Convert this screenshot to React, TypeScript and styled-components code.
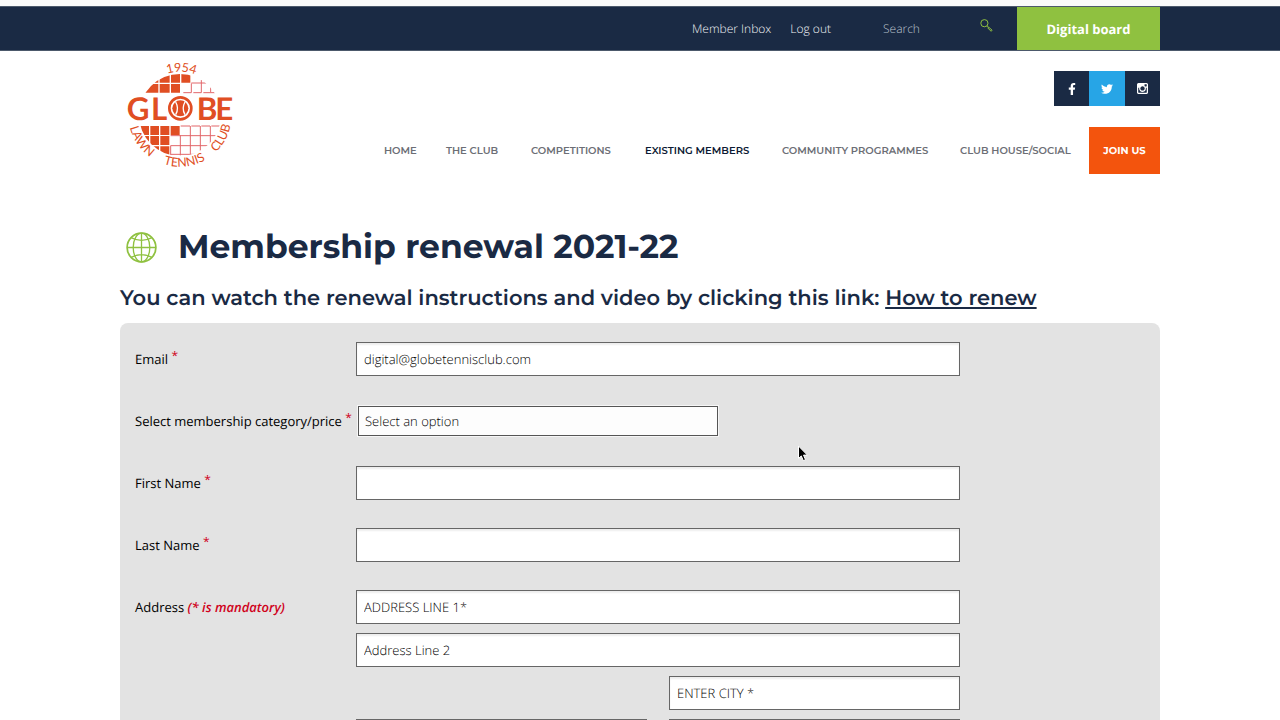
import React from "react";
import styled, { createGlobalStyle } from "styled-components";
import { FaFacebookF, FaTwitter } from "react-icons/fa";

const navy = "#1a2a44";
const green = "#8fc140";
const orange = "#f3540d";
const logoOrange = "#e04e23";
const bodyFont = `"Open Sans", "Noto Sans", sans-serif`;
const headingFont = `Montserrat, Inter, sans-serif`;

const GlobalStyle = createGlobalStyle`
  *, *::before, *::after { box-sizing: border-box; }
  html { scrollbar-width: none; }
  body {
    margin: 0;
    background: #fff;
    color: #000;
    font-family: ${bodyFont};
    font-size: 13px;
    line-height: 18px;
    text-rendering: geometricPrecision;
  }
  input, select, button { text-rendering: inherit; }
  a { color: inherit; text-decoration: none; }
`;

const Page = styled.div`
  position: relative;
  border-top: 6px solid #fafafa;
`;

const Container = styled.div`
  max-width: 1040px;
  margin: 0 auto;
`;

const TopBar = styled.div`
  background: ${navy};
  border-top: 1px solid #4c596b;
  border-bottom: 1px solid #4c596b;
`;

const TopBarInner = styled(Container)`
  display: flex;
  align-items: stretch;
  justify-content: flex-end;
  height: 43px;
`;

const TopLinks = styled.nav`
  display: flex;
  align-items: center;
  gap: 19px;
  color: #f0f2f5;
  font-size: 12px;
  font-weight: 300;
`;

const SearchForm = styled.form`
  display: flex;
  align-items: center;
  width: 110px;
  margin: 0 24px 0 52px;
`;

const SearchInput = styled.input`
  flex: 1;
  min-width: 0;
  padding: 0;
  border: 0;
  background: transparent;
  color: #fff;
  font: 300 12px/18px ${bodyFont};
  &::placeholder { color: #bcc3cd; opacity: 1; }
`;

const SearchButton = styled.button`
  display: flex;
  padding: 0 0 6px;
  border: 0;
  background: none;
`;

const BoardLink = styled.a`
  display: flex;
  align-items: center;
  justify-content: center;
  width: 143px;
  background: ${green};
  color: #fff;
  font-size: 13px;
  font-weight: 700;
`;

const Header = styled.header`
  padding-top: 10px;
`;

const HeaderInner = styled(Container)`
  display: flex;
  justify-content: space-between;
  align-items: flex-start;
`;

const LogoLink = styled.a`
  display: block;
  padding-left: 6px;
  svg { display: block; overflow: visible; }
`;

const HeaderRight = styled.div`
  display: flex;
  flex-direction: column;
  align-items: flex-end;
  gap: 21px;
  padding-top: 10px;
`;

const SocialLinks = styled.div`
  display: flex;
`;

const SocialLink = styled.a<{ $bg: string; $width: number }>`
  display: flex;
  align-items: center;
  justify-content: center;
  width: ${(p) => p.$width}px;
  height: 35px;
  background: ${(p) => p.$bg};
  color: #fff;
`;

const MainNav = styled.nav`
  display: flex;
  align-items: stretch;
  height: 47px;
  font-family: ${headingFont};
  font-size: 10px;
  font-weight: 600;
`;

const NavLink = styled.a<{ $width: number; $active?: boolean }>`
  display: flex;
  align-items: center;
  width: ${(p) => p.$width}px;
  white-space: nowrap;
  color: ${(p) => (p.$active ? "#0c1a33" : "#6c6e75")};
`;

const JoinLink = styled.a`
  display: flex;
  align-items: center;
  justify-content: center;
  width: 71px;
  background: ${orange};
  color: #fff;
  font-weight: 700;
`;

const Main = styled(Container).attrs({ as: "main" })`
  padding-top: 49px;
`;

const TitleRow = styled.div`
  display: flex;
  align-items: center;
  gap: 21px;
  height: 48px;
  padding-left: 6px;
  svg { flex: none; }
`;

const Title = styled.h1`
  margin: 0;
  color: ${navy};
  font: 700 33px/48px ${headingFont};
`;

const Intro = styled.h2`
  margin: 14px 0 10px;
  color: ${navy};
  font: 600 21px/28px ${headingFont};
  white-space: nowrap;
  a { text-decoration: underline; text-decoration-thickness: 2px; text-underline-offset: 2px; }
`;

const FormPanel = styled.form`
  display: flex;
  flex-direction: column;
  gap: 28px;
  padding: 19px 15px 28px;
  border-radius: 8px;
  background: #e3e3e3;
`;

const Row = styled.div`
  display: grid;
  grid-template-columns: 221px minmax(0, 604px);
  align-items: start;
`;

const Label = styled.label`
  line-height: 34px;
  font-weight: 500;
  white-space: nowrap;
`;

const Star = styled.span`
  color: #d0021b;
  font-size: 12px;
  line-height: 12px;
  position: relative;
  top: -4px;
`;

const Mandatory = styled.em`
  color: #d0021b;
  font-weight: 600;
`;

const TextInput = styled.input`
  width: 100%;
  height: 34px;
  padding: 0 7px;
  border: 1px solid #666;
  border-radius: 0;
  background: #fff;
  box-shadow: inset 0 2px 2px #eee;
  color: #000;
  font: 300 13px/18px ${bodyFont};
  &::placeholder { color: #000; opacity: 1; }
`;

const SelectInput = styled.select`
  width: 360px;
  height: 30px;
  margin: 2px;
  padding: 0 6px;
  appearance: none;
  border: 1px solid #555;
  border-radius: 0;
  outline: 1px solid #f6f6f6;
  background: #fdfdfd;
  color: #000;
  font: 300 13px/18px ${bodyFont};
`;

const AddressFields = styled.div`
  display: grid;
  grid-template-columns: 1fr 1fr;
  gap: 9px 22px;
`;

const WideInput = styled(TextInput)`
  grid-column: 1 / -1;
`;

const RightInput = styled(TextInput)`
  grid-column: 2;
`;

const Pointer = styled.svg`
  position: absolute;
  left: 797px;
  top: 439px;
  pointer-events: none;
`;

function ClubLogo() {
  return (
    <svg width="107" height="107" viewBox="48 33 321 321" role="img" aria-label="Globe Lawn Tennis Club 1954">
      <defs>
        <clipPath id="globe"><circle cx="210" cy="195" r="123" /></clipPath>
        <path id="arcTop" d="M80 195 A130 130 0 0 1 340 195" />
        <path id="arcBottom" d="M55 195 A155 155 0 0 0 365 195" />
      </defs>
      <g clipPath="url(#globe)">
        <path
          fill={logoOrange}
          d="M80 70h65v28h-65zM149 70h30v28h-30zM183 70h27v28h-27zM214 70h27v28h-27z
             M80 102h65v26h-65zM149 102h30v26h-30zM183 102h27v26h-27z
             M80 228h37v27h-37zM121 228h26v27h-26zM151 228h27v27h-27zM182 228h27v27h-27z
             M80 258h37v27h-37zM121 258h26v27h-26zM151 258h27v27h-27z
             M80 289h67v30h-67zM151 289h27v30h-27z"
        />
        <path
          fill="none"
          stroke="#e2676a"
          strokeWidth="3"
          d="M244 99h45M220 128h24v-28M250 128h24v-38M280 128h22v-26M302 128h16
             M212 228h28M244 228h26M274 228h26M304 228h30M182 257h148M182 287h138M182 313h74
             M211 256v60M241 228v86M271 228v86M301 228v66M182 287v30"
        />
      </g>
      <g fill={logoOrange} fontFamily="Lato, sans-serif">
        <g fontSize="94" fontWeight="700">
          <text x="50" y="210">G</text>
          <text x="123" y="210">L</text>
          <text x="260" y="210">B</text>
          <text x="316" y="210">E</text>
        </g>
        <g fontSize="37" fontWeight="400">
          <text textAnchor="middle"><textPath href="#arcTop" startOffset="51%">1954</textPath></text>
          <text textAnchor="middle"><textPath href="#arcBottom" startOffset="19%">LAWN</textPath></text>
          <text textAnchor="middle"><textPath href="#arcBottom" startOffset="53%">TENNIS</textPath></text>
          <text textAnchor="middle"><textPath href="#arcBottom" startOffset="84%">CLUB</textPath></text>
        </g>
      </g>
      <circle cx="211" cy="175" r="33" fill="#fff" stroke={logoOrange} strokeWidth="8" />
      <circle cx="211" cy="175" r="24" fill={logoOrange} />
      <path d="M197 156Q208 175 197 194M225 156Q214 175 225 194" fill="none" stroke="#fff" strokeWidth="4" />
    </svg>
  );
}

function SearchIcon() {
  return (
    <svg width="13" height="13" viewBox="0 0 13 13" fill="none" stroke={green} aria-hidden="true">
      <circle cx="4.4" cy="4.2" r="3.6" />
      <path d="M7 6.8l1.6 1.5" />
      <path d="M8.6 8.1l3.5 3.1-1 1.1-3.3-3.3z" strokeLinejoin="round" />
    </svg>
  );
}

function GlobeIcon() {
  return (
    <svg width="31" height="31" viewBox="0 0 31 31" fill="none" stroke={green} strokeWidth="1.3" aria-hidden="true">
      <circle cx="15.5" cy="15.5" r="14.4" strokeWidth="1.7" />
      <ellipse cx="15.5" cy="15.5" rx="8.3" ry="14.4" />
      <path d="M15.5 1v29M1 15.5h29M5 5.6Q15.5 11 26 5.6M5 25.4Q15.5 20 26 25.4" />
    </svg>
  );
}

function InstagramIcon() {
  return (
    <svg width="11" height="11" viewBox="0 128 1536 1536" fill="currentColor" aria-hidden="true">
      <path d="M1362 1426v-648h-135q20 63 20 131 0 126-64 232.5t-174 168.5-240 62q-197 0-337-135.5t-140-327.5q0-68 20-131h-141v648q0 26 17.5 43.5t43.5 17.5h1069q25 0 43-17.5t18-43.5zm-284-533q0-124-90.5-211.5t-218.5-87.5q-127 0-217.5 87.5t-90.5 211.5 90.5 211.5 217.5 87.5q128 0 218.5-87.5t90.5-211.5zm284-360v-165q0-28-20-48.5t-49-20.5h-174q-29 0-49 20.5t-20 48.5v165q0 29 20 49t49 20h174q29 0 49-20t20-49zm174-208v1142q0 81-58 139t-139 58h-1142q-81 0-139-58t-58-139v-1142q0-81 58-139t139-58h1142q81 0 139 58t58 139z" />
    </svg>
  );
}

const navItems = [
  { text: "HOME", width: 62 },
  { text: "THE CLUB", width: 85 },
  { text: "COMPETITIONS", width: 114 },
  { text: "EXISTING MEMBERS", width: 137, active: true },
  { text: "COMMUNITY PROGRAMMES", width: 178 },
  { text: "CLUB HOUSE/SOCIAL", width: 129 },
];

export default function App() {
  return (
    <>
      <GlobalStyle />
      <Page>
        <TopBar>
          <TopBarInner>
            <TopLinks aria-label="Account">
              <a href="#inbox">Member Inbox</a>
              <a href="#logout">Log out</a>
            </TopLinks>
            <SearchForm role="search">
              <SearchInput type="text" placeholder="Search" aria-label="Search" />
              <SearchButton type="button" aria-label="Go"><SearchIcon /></SearchButton>
            </SearchForm>
            <BoardLink href="#board">Digital board</BoardLink>
          </TopBarInner>
        </TopBar>

        <Header>
          <HeaderInner>
            <LogoLink href="#home"><ClubLogo /></LogoLink>
            <HeaderRight>
              <SocialLinks>
                <SocialLink href="#facebook" aria-label="Facebook" $bg={navy} $width={35}><FaFacebookF size={12} /></SocialLink>
                <SocialLink href="#twitter" aria-label="Twitter" $bg="#27a5e6" $width={36}><FaTwitter size={12} /></SocialLink>
                <SocialLink href="#instagram" aria-label="Instagram" $bg={navy} $width={35}><InstagramIcon /></SocialLink>
              </SocialLinks>
              <MainNav aria-label="Main">
                {navItems.map((item) => (
                  <NavLink key={item.text} href="#nav" $width={item.width} $active={item.active}>{item.text}</NavLink>
                ))}
                <JoinLink href="#join">JOIN US</JoinLink>
              </MainNav>
            </HeaderRight>
          </HeaderInner>
        </Header>

        <Main>
          <TitleRow>
            <GlobeIcon />
            <Title>Membership renewal 2021-22</Title>
          </TitleRow>
          <Intro>
            You can watch the renewal instructions and video by clicking this link: <a href="#how">How to renew</a>
          </Intro>

          <FormPanel>
            <Row>
              <Label htmlFor="email">Email <Star>*</Star></Label>
              <TextInput id="email" type="email" defaultValue="digital@globetennisclub.com" />
            </Row>
            <Row>
              <Label htmlFor="category">Select membership category/price <Star>*</Star></Label>
              <SelectInput id="category"><option>Select an option</option></SelectInput>
            </Row>
            <Row>
              <Label htmlFor="first">First Name <Star>*</Star></Label>
              <TextInput id="first" type="text" />
            </Row>
            <Row>
              <Label htmlFor="last">Last Name <Star>*</Star></Label>
              <TextInput id="last" type="text" />
            </Row>
            <Row>
              <Label htmlFor="address1">Address <Mandatory>(* is mandatory)</Mandatory></Label>
              <AddressFields>
                <WideInput id="address1" type="text" placeholder="ADDRESS LINE 1*" />
                <WideInput type="text" placeholder="Address Line 2" aria-label="Address line 2" />
                <RightInput type="text" placeholder="ENTER CITY *" aria-label="City" />
                <TextInput type="text" aria-label="County" />
                <TextInput type="text" aria-label="Postcode" />
              </AddressFields>
            </Row>
          </FormPanel>
        </Main>

        <Pointer width="12" height="18" viewBox="0 0 12 18" aria-hidden="true">
          <path d="M1.5 1v12.5l2.8-2.6 2 4.7 2.2-.9-2-4.6h3.9z" fill="#000" stroke="#fff" strokeWidth="1" />
        </Pointer>
      </Page>
    </>
  );
}
